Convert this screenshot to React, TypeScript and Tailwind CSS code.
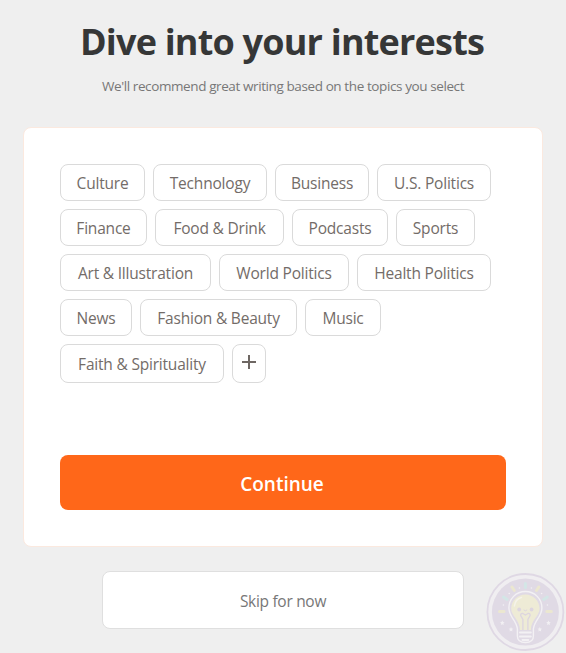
const TOPICS = [
  { label: "Culture", size: "w-[85px]" },
  { label: "Technology", size: "w-[114px]" },
  { label: "Business", size: "w-[94px]" },
  { label: "U.S. Politics", size: "w-[114px]" },
  { label: "Finance", size: "w-[87px]" },
  { label: "Food & Drink", size: "w-[129px]" },
  { label: "Podcasts", size: "w-[96px]" },
  { label: "Sports", size: "w-[79px]" },
  { label: "Art & Illustration", size: "w-[151px]" },
  { label: "World Politics", size: "w-[130px]" },
  { label: "Health Politics", size: "w-[134px]" },
  { label: "News", size: "w-[72px]" },
  { label: "Fashion & Beauty", size: "w-[157px]" },
  { label: "Music", size: "w-[76px]" },
  { label: "Faith & Spirituality", size: "w-[164px] h-[39px]" },
];

function TopicChip({ label, size }: { label: string; size: string }) {
  return (
    <button
      type="button"
      className={`flex min-h-[37px] items-center justify-center rounded-lg border border-[#dadada] bg-white pt-px text-[15.5px] leading-5 tracking-[-0.2px] whitespace-nowrap text-[#736c68] ${size}`}
    >
      {label}
    </button>
  );
}

function BulbBadge() {
  return (
    <svg
      width="80"
      height="80"
      viewBox="0 0 80 80"
      fill="none"
      aria-hidden="true"
      className="absolute right-px bottom-px"
    >
      <circle cx="40.4" cy="40" r="38" fill="#f0eef1" stroke="#dfd8e4" strokeWidth="1.8" />
      <circle cx="40.4" cy="40" r="33.5" fill="#e0dae5" />
      <g strokeWidth="3" strokeLinecap="round">
        <path d="M40.4 11.5v4M18.5 25l3.5 2.5M62.3 25l-3.5 2.5" stroke="#d3e6e6" />
        <path
          d="M27 15l2.3 3.5M53.8 15l-2.3 3.5M14.5 39.5h4.5M61.8 39.5h4.5"
          stroke="#ebe7d0"
        />
      </g>
      <path
        d="M40.4 19.5C30.9 19.5 23.9 27 23.9 36C23.9 45 31.4 48 32.4 57V64Q32.4 70.5 40.4 70.5Q48.4 70.5 48.4 64V57C49.4 48 56.9 45 56.9 36C56.9 27 49.9 19.5 40.4 19.5Z"
        fill="#e0dae5"
        stroke="#f3f1f4"
        strokeWidth="1.4"
      />
      <path
        d="M40.4 22.5C32.4 22.5 26.2 29 26.2 36.5C26.2 44 34.9 48 34.9 58H45.9C45.9 48 54.6 44 54.6 36.5C54.6 29 48.4 22.5 40.4 22.5Z"
        fill="#eeebd6"
      />
      <path d="M29.4 34Q30.4 27 36.4 25.5" stroke="#f5f3ea" strokeWidth="1.5" strokeLinecap="round" />
      <circle cx="34.2" cy="37.5" r="1.9" fill="#ddd5df" />
      <circle cx="46.6" cy="37.5" r="1.9" fill="#ddd5df" />
      <path
        d="M37.9 58V47.5L35.7 43.5Q35.5 41 37.9 41.5L40.4 43L42.9 41.5Q45.3 41 45.1 43.5L42.9 47.5V58"
        stroke="#ddd5df"
        strokeWidth="1.3"
      />
      <path d="M38.7 37.8Q40.4 39.8 42.1 37.8" stroke="#ddd5df" />
      <path
        d="M34.9 60.5h11M34.9 64.5h11M37.4 68h6"
        stroke="#f3f1f4"
        strokeWidth="1.8"
        strokeLinecap="round"
      />
      <g fill="#f2f0f3">
        <path d="M17.3 48.5l.7 1.5 1.6.2-1.2 1.1.3 1.7-1.4-.8-1.4.8.3-1.7-1.2-1.1 1.6-.2zM63.5 48.5l.7 1.5 1.6.2-1.2 1.1.3 1.7-1.4-.8-1.4.8.3-1.7-1.2-1.1 1.6-.2zM26 55l.7 1.5 1.6.2-1.2 1.1.3 1.7-1.4-.8-1.4.8.3-1.7-1.2-1.1 1.6-.2zM54.8 55l.7 1.5 1.6.2-1.2 1.1.3 1.7-1.4-.8-1.4.8.3-1.7-1.2-1.1 1.6-.2z" />
        <circle cx="34.4" cy="16" r=".8" />
        <circle cx="46.4" cy="16" r=".8" />
        <circle cx="24.2" cy="21.5" r=".8" />
        <circle cx="56.6" cy="21.5" r=".8" />
        <circle cx="18.4" cy="33" r=".8" />
        <circle cx="62.4" cy="33" r=".8" />
      </g>
    </svg>
  );
}

export default function App() {
  return (
    <main className="relative flex h-[653px] w-[566px] flex-col items-center overflow-hidden bg-[#efefef] font-['Open_Sans',sans-serif]">
      <h1 className="mt-[18px] pr-0.5 text-[36px] leading-[48px] font-bold tracking-[-0.8px] whitespace-nowrap text-[#363737]">
        Dive into your interests
      </h1>
      <p className="mt-[10px] text-[13.5px] leading-5 tracking-[-0.4px] whitespace-nowrap text-[#777]">
        We&#39;ll recommend great writing based on the topics you select
      </p>

      <section className="mt-[31px] h-[420px] w-[520px] shrink-0 rounded-lg border border-[#fbe9df] bg-white px-9 pt-9">
        <div className="flex h-[219px] flex-wrap content-start gap-2">
          {TOPICS.map((topic) => (
            <TopicChip key={topic.label} label={topic.label} size={topic.size} />
          ))}
          <button
            type="button"
            aria-label="More topics"
            className="flex h-[39px] w-[34px] items-center justify-center rounded-lg border border-[#dadada] bg-white pb-[3px] text-[#6e6763]"
          >
            <svg width="14" height="14" viewBox="0 0 14 14" aria-hidden="true">
              <path d="M7 0v14M0 7h14" stroke="currentColor" strokeWidth="2" />
            </svg>
          </button>
        </div>
        <button
          type="button"
          className="mt-[72px] flex h-[55px] w-full items-center justify-center rounded-lg bg-[#ff6719] pt-1 pr-0.5 text-[19px] font-semibold text-white"
        >
          Continue
        </button>
      </section>

      <button
        type="button"
        className="mt-6 flex h-[58px] w-[362px] shrink-0 items-center justify-center rounded-lg border border-[#dfdfdf] bg-white pt-1 text-[15.5px] tracking-[-0.3px] text-[#777]"
      >
        Skip for now
      </button>

      <BulbBadge />
    </main>
  );
}
